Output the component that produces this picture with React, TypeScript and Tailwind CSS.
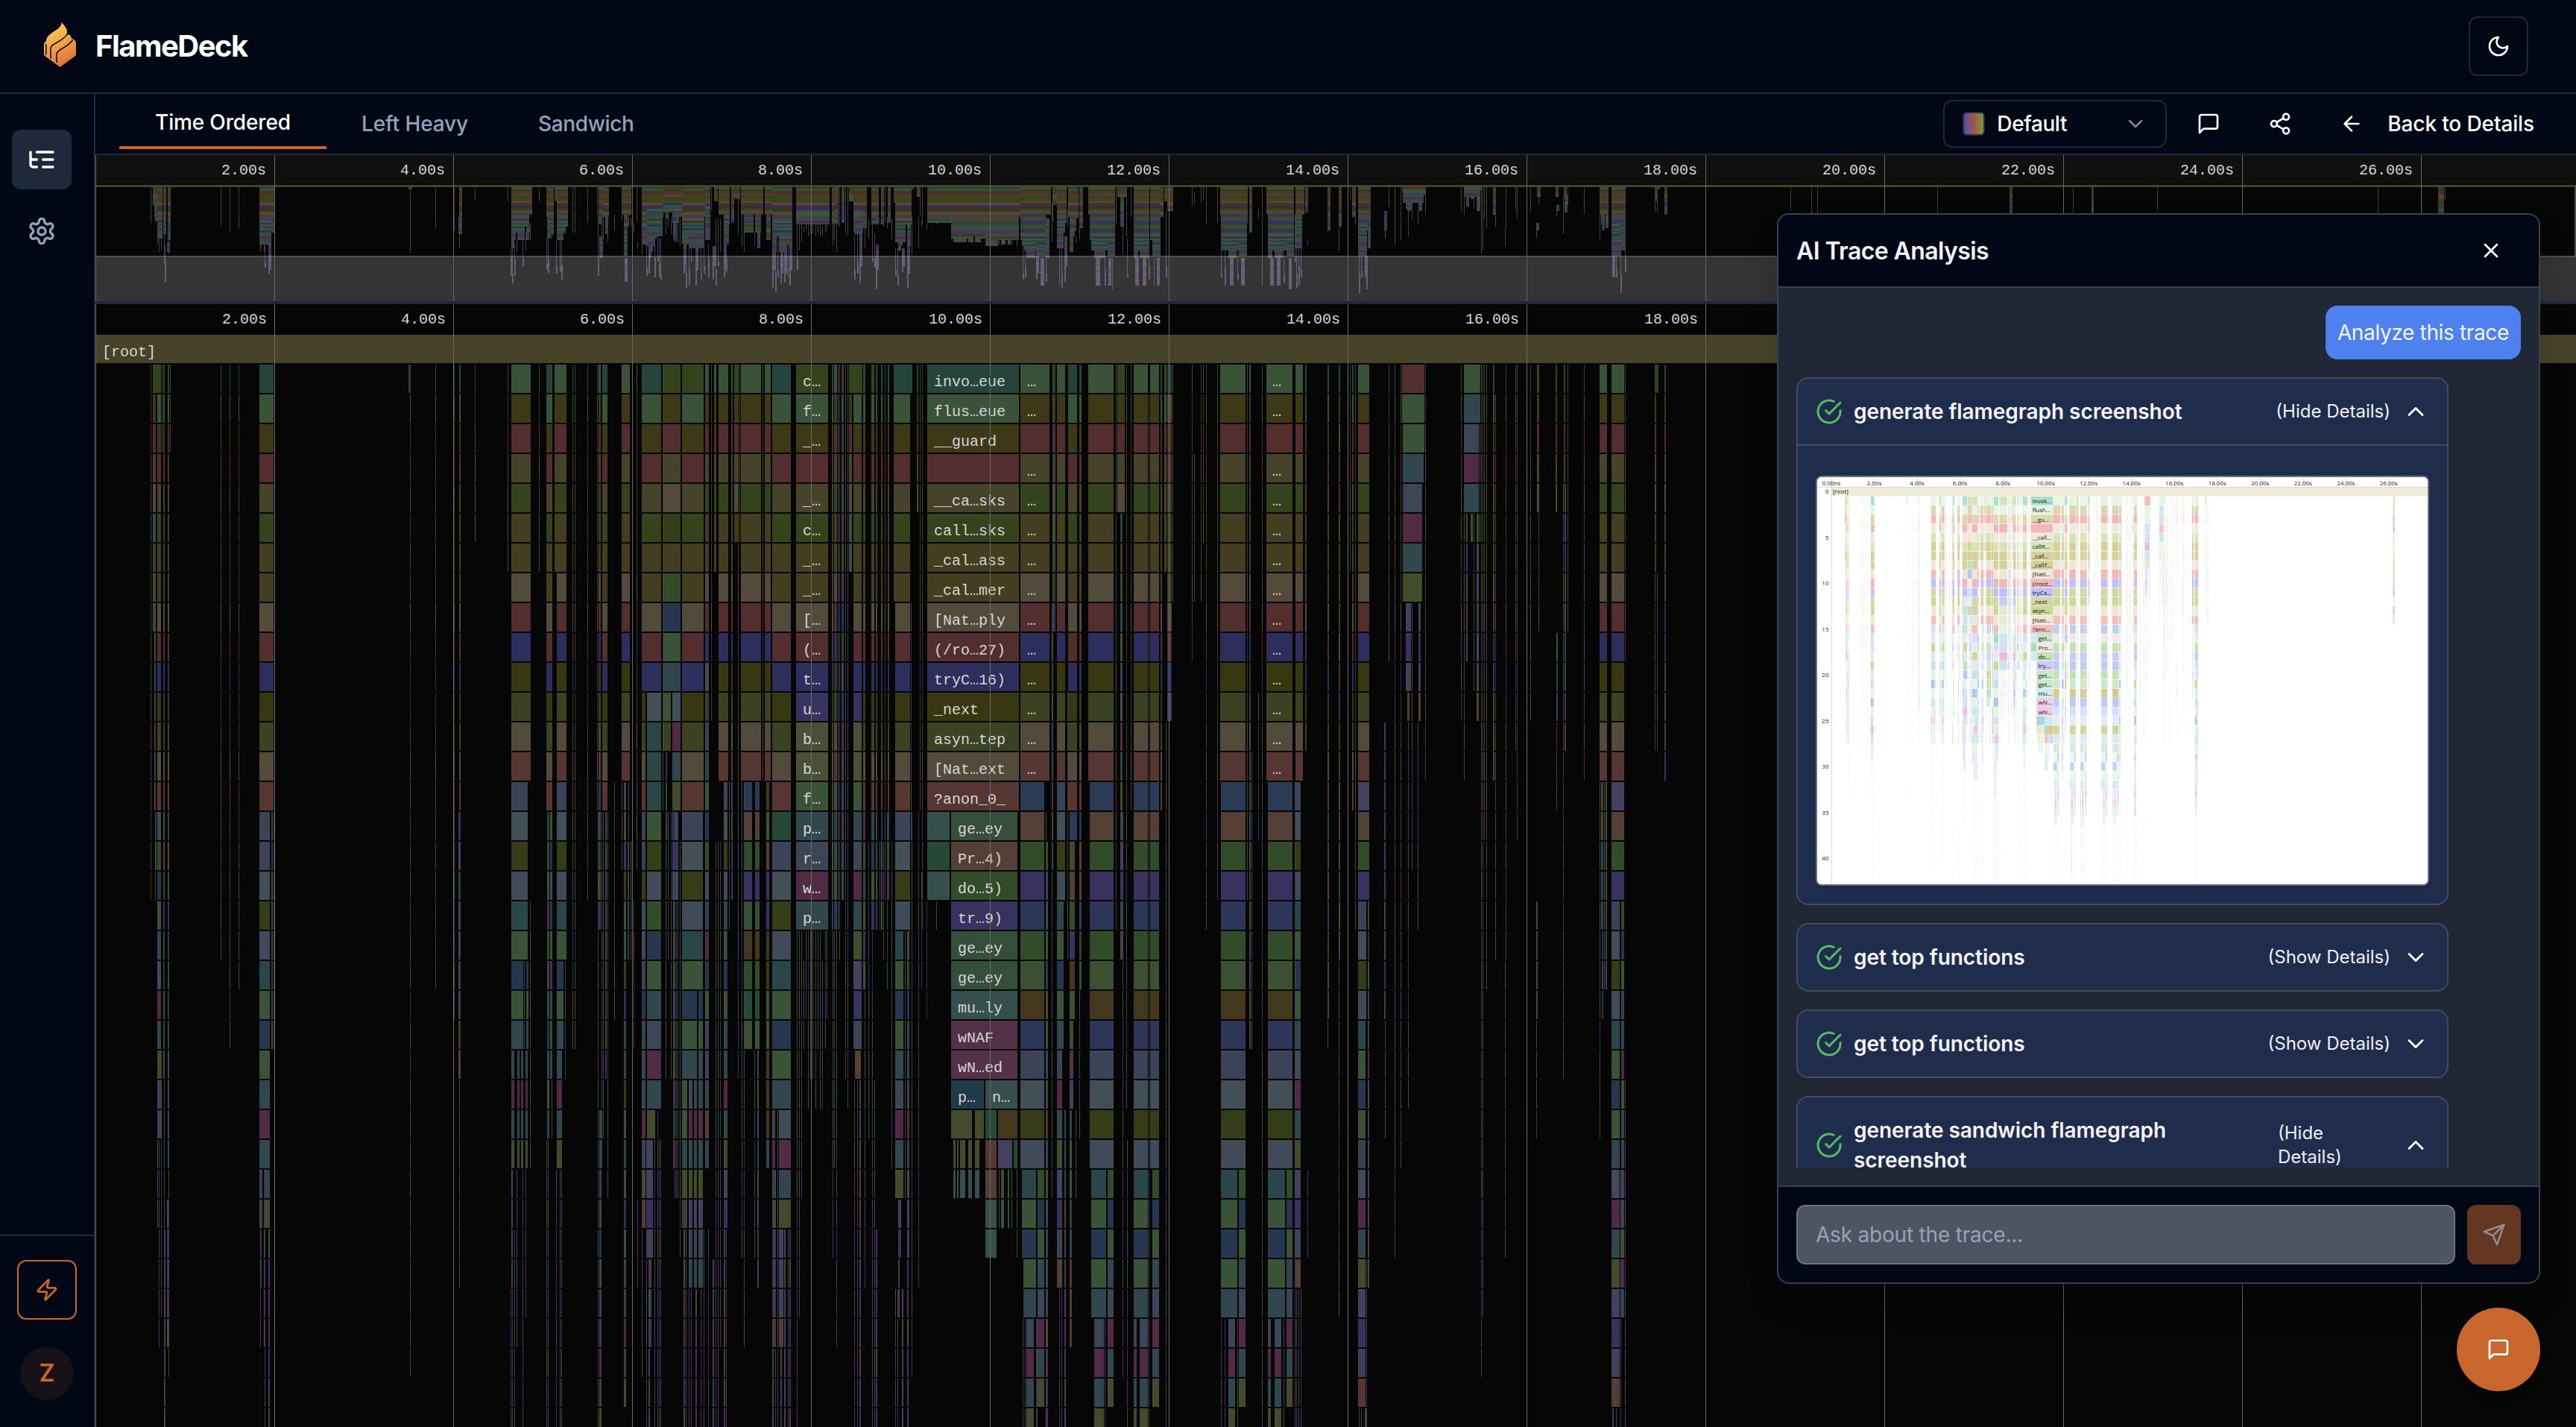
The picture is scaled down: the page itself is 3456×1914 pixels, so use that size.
import React from "react";

type Column = [x: number, w: number, row: number, colors: string];
type Sliver = [x: number, from: number, to: number, w?: number];
type Label = [x: number, row: number, text: string];

const DARK: Record<string, string> = {
  T: "#26453a", g: "#3a5238", o: "#3d3815", r: "#532e2e", k: "#47432a", l: "#34431c", y: "#423e1f",
  s: "#524a3a", b: "#2e2e5c", n: "#373811", m: "#3a4221", R: "#553633", B: "#2c3b55", W: "#533f35",
  F: "#324c29", I: "#37335e", D: "#3d4357", S: "#434f56", O: "#343d17", C: "#404a58", E: "#2a4648",
  P: "#512a44", H: "#27364f", J: "#3b4f31", L: "#43381e", N: "#2d3558", X: "#31464d", A: "#3b4555",
  U: "#444060", V: "#48305a", Y: "#434b2d", w: "#533149", t: "#264836", q: "#364f4c", M: "#344e3b",
  Q: "#213b49", K: "#4a5038",
};

const LIGHT: Record<string, string> = {
  T: "#b0e0cf", g: "#e6f4e6", o: "#ddd8b0", r: "#f1b8b8", k: "#efe9dc", l: "#d6e4b8", y: "#d6d09c",
  s: "#efe6d8", b: "#bfbffa", n: "#d6d6a4", m: "#ccd898", R: "#f2c0bc", B: "#bccff2", W: "#f4e8e4",
  F: "#bfe4b0", I: "#ccc8f8", D: "#d8def6", S: "#e2ecf4", O: "#cdd99a", C: "#e0e8f4", E: "#bfe6e4",
  P: "#eebcdc", H: "#b0c6f2", J: "#cce8c4", L: "#d9c894", N: "#c0c8f6", X: "#cce6ec", A: "#d4e0f0",
  U: "#dcd8f6", V: "#f0dcf4", Y: "#e4ecd0", w: "#f0cce4", t: "#a8dcc0", q: "#d0ecea", M: "#c8e8cc",
  Q: "#a8d4e6", K: "#e4e8d4",
};

const A14 = "gorklyysrbnmsR";
const B15 = "T" + A14;
const DEEP = "BWFINFJLNDSOC";

const COLUMNS: Column[] = [
  [202, 1, 1, "lorksXmmmFgsYUYTFL"], [205, 11, 1, "l"], [205, 4, 2, "orksAmYY"], [207, 2, 10, "gXDPEY"],
  [208, 2, 16, "IC"], [208, 1, 18, "L"], [211, 5, 2, A14 + "qFHgXCPXYUD"], [217, 1, 1, "TXg"],
  [219, 2, 1, "l" + A14 + "qWFIFHgEY"], [225, 2, 1, "l" + A14 + "EWFIBFHEUDDX"], [228, 1, 1, "gor"],
  [296, 1, 1, B15 + "FtFkI"], [308, 1, 1, B15 + "FTFPFXTA"], [320, 1, 1, B15 + "TFYkYY"],
  [348, 19, 1, B15], [348, 14, 16, "DDSOCEgHgXPX"], [364, 2, 16, "FHgXXPEY"], [367, 1, 16, "YXDXgXUX"],
  [348, 4, 28, "XY"], [355, 7, 28, "XY"],
  [548, 3, 1, "T"], [550, 1, 2, A14 + "PRFIYFHgIXDXU"], [584, 1, 1, B15 + "WFRFIX"],
  [609, 1, 1, B15 + "FRgIXYU"], [616, 2, 1, B15], [615, 3, 16, "IUTUDXXLW"],
  [637, 1, 1, "lrksgg"], [681, 1, 1, "lorksgE"],
  [686, 26, 1, A14], [686, 22, 15, "DSOCEg"], [686, 16, 21, "HgX"], [703, 1, 21, "XgE"], [706, 3, 21, "HgX"],
  [686, 4, 24, "XPXY"], [694, 3, 24, "XPXY"], [699, 3, 24, "XPXY"], [705, 3, 24, "XPXY"], [686, 2, 28, "UDXR"],
  [723, 1, 1, "lorkyYY"],
  [733, 8, 1, B15], [734, 3, 16, "TFgPFDXHXgE"], [738, 3, 16, "gHCHgPXgX"],
  [744, 16, 1, "gorklyy"], [747, 13, 8, "srbnmsRDSOCEg"], [747, 9, 21, "HgX"], [747, 7, 24, "XPXY"],
  [768, 1, 1, B15 + "WFWIBHYD"], [771, 1, 1, B15 + "FkUgHFWY"], [788, 1, 1, B15 + "WTX"],
  [801, 1, 1, B15], [803, 3, 1, A14 + "BDTYI"], [808, 7, 1, B15], [804, 3, 26, "XXEgHgXXPXY"],
  [834, 11, 1, A14], [843, 1, 15, "gXgXDH"], [837, 3, 15, "DWILggLbXXOCEgHgXXPXY"],
  [848, 1, 1, A14 + "IgF"], [854, 1, 1, A14 + "DsX"],
  [861, 26, 1, "Tgorklyysrb"], [861, 5, 12, "nmsRDDOCCDHXAAPDYW"], [868, 19, 12, "SEEEgOCFHgXAPX"],
  [868, 11, 26, "Y"], [868, 8, 27, "UUIA"], [871, 3, 31, "WXV"],
  [889, 1, 1, A14 + "X"], [890, 23, 1, "lorksOyFHgX"], [890, 10, 12, "gm"], [902, 11, 12, "SPXY"], [902, 7, 16, "UIC"],
  [893, 2, 14, "IFX"],
  [915, 29, 1, "lgorklyysrbnmsR"], [915, 28, 16, "DSOCEg"], [915, 20, 22, "HgX"], [937, 6, 22, "HgXEPXYUDX"],
  [915, 7, 25, "ggEYF"], [924, 5, 25, "CPXYUDX"], [931, 4, 25, "APXYUDX"],
  [946, 5, 1, "gorklyysrbSmAEgHFCEPHgUDXWX"], [954, 1, 1, "XorklyyIsbnI"], [958, 3, 1, "gorklyy"],
  [964, 13, 1, A14], [971, 5, 15, "DSOCXgHgXXPXYUI"], [981, 2, 1, A14 + "UgII"], [985, 5, 1, "lorkso"],
  [990, 1, 1, A14], [992, 1, 1, "oXrkly"],
  [994, 27, 1, A14], [999, 10, 15, "BWFIMLFtJ"], [1013, 6, 15, "BWFIMLFtg"],
  [1023, 1, 1, A14], [1026, 8, 1, A14], [1028, 4, 15, "LgWIIOOggLLLX"],
  [1036, 25, 1, B15 + "tDSOCEgHgX"], [1036, 4, 26, "DPXYUDXR"], [1045, 16, 26, "CPXY"], [1045, 6, 30, "UDAW"],
  [1068, 43, 1, "lgorklyysrbIKKgXAPX"],
  [1116, 2, 1, B15 + "XgYI"], [1119, 3, 1, A14 + "gTXgH"], [1129, 2, 1, "rgorkLyPbrgIPVVVDX"],
  [1139, 18, 1, "l"], [1139, 4, 2, "orksgY"], [1145, 11, 2, "gorklyysrbIKKgXAPXYUID"], [1147, 8, 24, "W"],
  [1158, 3, 1, B15 + "PFXgIg"], [1169, 4, 1, "l" + A14 + "XHgI"], [1175, 2, 1, B15 + "DXgI"], [1182, 2, 1, B15 + "HDIg"],
  [1187, 1, 1, B15 + "XFP"], [1191, 2, 1, B15 + "XFP"],
  [1199, 25, 1, "T"], [1199, 22, 2, "gorklyy"], [1201, 20, 9, "srbnmsRDSOC"], [1201, 11, 20, "EgHgXAPXY"],
  [1214, 1, 20, "XgHgXAPXY"], [1217, 3, 20, "gFHXXDPXYUD"], [1205, 4, 29, "UI"], [1205, 2, 31, "DW"],
  [1230, 2, 1, "lorks"], [1237, 1, 1, B15 + "IYXP"], [1234, 1, 1, B15],
  [1244, 123, 1, "TgorklyysrbnmsR"], [1244, 30, 16, "qtq"], [1276, 89, 16, "MWFIMMqww"],
  [1276, 44, 25, "Q"], [1322, 43, 25, "q"], [1276, 28, 26, "Y"], [1308, 12, 26, "Y"], [1322, 15, 26, "tRWqq"],
  [1339, 26, 26, "L"], [1339, 19, 27, "U"], [1360, 5, 27, "t"],
  [1279, 3, 27, "Yq"], [1284, 2, 27, "Yq"], [1288, 7, 27, "Yq"], [1299, 5, 27, "Yq"], [1308, 6, 27, "Yq"],
  [1340, 1, 28, "YY"], [1343, 4, 28, "Yq"], [1352, 2, 28, "gq"], [1357, 1, 28, "YY"], [1364, 1, 28, "YYY"],
  [1369, 39, 1, A14], [1369, 32, 15, DEEP], [1371, 19, 28, "EgH"], [1373, 17, 31, "gX"], [1377, 10, 33, "APXY"],
  [1392, 9, 28, "FHgXAPXY"], [1404, 2, 17, "YUggHYgDYPXYUADXsVVV"],
  [1413, 3, 1, "lorksgyoI"], [1418, 11, 1, A14 + "DSOC"], [1418, 9, 19, "EgHgX"], [1418, 7, 24, "APXYUIDW"],
  [1433, 2, 1, B15], [1435, 10, 1, B15 + "B"], [1435, 7, 17, "YWFILg"], [1435, 5, 23, "YwU"], [1435, 3, 26, "EggTXRWR"],
  [1448, 3, 1, B15 + "HWWILg"],
  [1460, 34, 1, A14], [1462, 32, 15, DEEP], [1464, 20, 28, "EgHgX"], [1468, 13, 33, "APXY"], [1486, 8, 28, "FHgXAPXY"],
  [1499, 10, 1, "lorks"], [1503, 3, 6, "TyFXgXSPEYDUIDW"], [1511, 1, 1, B15 + "UWIgXDXPYU"], [1517, 1, 1, B15],
  [1521, 19, 1, A14 + DEEP + "EgHgX"], [1521, 4, 33, "APXY"], [1529, 11, 33, "APXY"],
  [1543, 12, 1, A14 + DEEP], [1546, 9, 28, "FHgXAPXY"],
  [1557, 2, 1, B15], [1562, 3, 1, "lgrkkyy"], [1566, 6, 1, "TsorklyysrbU"],
  [1573, 1, 1, "gorklyyX"], [1599, 1, 1, "gorklyysrb"], [1611, 1, 1, "Torklyyg"], [1614, 1, 1, "gorkls"],
  [1618, 1, 1, B15 + "IFDY"], [1633, 1, 1, B15 + "IWI"],
  [1637, 34, 1, A14], [1638, 33, 15, DEEP], [1638, 22, 28, "EgHgX"], [1662, 9, 28, "FHgXAPXY"], [1648, 9, 33, "APXY"],
  [1676, 2, 1, A14 + "XDgPYXAgX"], [1673, 1, 1, A14 + "gFWX"], [1693, 1, 1, B15],
  [1699, 35, 1, A14], [1701, 33, 15, DEEP], [1701, 23, 28, "EgHgX"], [1726, 8, 28, "FHgXAPXY"],
  [1701, 4, 33, "APXY"], [1710, 9, 33, "APXY"],
  [1738, 10, 1, A14], [1738, 7, 15, "DSOCEgHgXCPXYUIDW"], [1751, 2, 1, "TXorklyysrbnm"],
  [1781, 2, 1, B15 + "TFWILYk"], [1796, 2, 1, "logorklyysrbnmsRXEgX"], [1811, 1, 1, "lTorklT"], [1814, 2, 1, B15],
  [1818, 1, 1, B15 + "FWLY"], [1822, 15, 1, A14 + "UWFI"], [1822, 11, 19, "DSOC"], [1822, 10, 23, "EgHgXCPXYUIDR"],
  [1835, 2, 19, "FHgXXPgXDUDWY"],
  [1857, 2, 13, "VVVVVVAWHF"], [1863, 1, 1, "lorksgykFs"], [1871, 1, 1, "lgokrgyysrbIYkgEXPXYYU"],
  [1879, 1, 1, B15 + "XXPXYYU"], [1881, 30, 1, "rg"], [1882, 29, 3, "g"], [1882, 28, 4, "X"], [1882, 26, 5, "APXY"],
  [1886, 7, 9, "UIA"], [1888, 3, 12, "W"], [1903, 3, 9, "UIAW"], [1912, 1, 1, "loWUtgLITWXYLL"], [1894, 1, 9, "UUWYWVVVY"],
  [1889, 1, 13, "UVUVUTFF"], [1902, 1, 13, "UVVVUUY"], [1960, 1, 1, "lgrkskyIgXgL"],
  [1964, 21, 1, "gX"], [1964, 20, 3, "APX"], [1964, 1, 6, "YIXgXVRUF"], [1967, 2, 6, "YIgRA"], [1973, 3, 6, "Y"],
  [1977, 1, 6, "gIgXYX"], [1981, 3, 6, "YUUXCWW"], [1987, 1, 1, A14 + "YIFYWTY"], [1989, 1, 1, B15 + "FRPIFgX"],
  [1985, 1, 1, "HXgXHg"], [1991, 1, 1, B15 + "L"], [1994, 1, 1, "lgokslkXDYkgIYUPXFYYg"],
  [2003, 2, 1, "lgorklysrbIYYg"], [2006, 1, 2, A14 + "RXYDY"], [2020, 1, 1, "lgorklyysrbIYYgXXPXY"],
  [2033, 1, 1, "Tgorklyysrbnm"], [2035, 1, 1, "XXXPXgUDXRVVVITt"], [2053, 1, 1, "lorksXysgsXg"],
  [2062, 3, 1, "lorks"], [2064, 1, 6, "Xyms"], [2061, 2, 19, "YDAA"], [2087, 2, 1, "lorks"], [2088, 2, 10, "gED"],
  [2088, 1, 13, "PXY"], [2097, 1, 5, "sXygkkYLTTTTFFHgW"], [2098, 2, 1, "lork"], [2099, 2, 5, "gUIgsEqVW"],
  [2103, 1, 1, "lorkXDXgX"], [2125, 1, 1, "TkrksrAXTqALkL"], [2146, 10, 1, A14], [2148, 3, 15, "WYEEE"],
  [2152, 1, 15, "XWgUWFD"], [2154, 2, 15, "YgggWFX"], [2146, 1, 15, "gWgIgDRg"], [2149, 2, 20, "HUH"],
  [2162, 17, 1, A14 + "UWFI"], [2162, 11, 19, "DSOC"], [2162, 11, 23, "EgHgXCPXYUIDW"], [2175, 4, 19, "FHgXXPgXDUDgPX"],
  [2180, 1, 1, "lorkslyysr"], [2220, 5, 1, "l"], [2220, 2, 2, "orksly"], [2220, 1, 8, "XLXkXL"], [2223, 1, 8, "AXLFYL"],
  [2233, 2, 1, "lorkslyXHHXWFI"],
];

const SLIVERS: Sliver[] = [
  [211, 25, 29], [213, 25, 33], [216, 24, 32], [220, 24, 36], [221, 30, 38], [224, 29, 33, 2], [226, 24, 34],
  [349, 30, 33], [350, 29, 31], [354, 28, 33], [355, 28, 38], [360, 30, 42, 2],
  [550, 29, 34], [616, 25, 31], [685, 32, 36], [687, 32, 44], [690, 30, 37], [693, 28, 33], [701, 28, 36], [705, 28, 32], [711, 19, 27],
  [733, 27, 39], [735, 27, 36], [740, 18, 26], [746, 28, 40], [751, 28, 40], [753, 28, 39], [758, 20, 24],
  [802, 16, 36], [807, 16, 27], [809, 16, 26], [812, 16, 24, 2], [815, 16, 28], [824, 15, 22], [834, 15, 17],
  [838, 37, 48, 2], [842, 17, 20], [846, 17, 20], [850, 19, 23], [855, 29, 31], [861, 29, 34], [867, 27, 40], [870, 31, 36, 2], [878, 26, 36],
  [882, 26, 36], [884, 27, 39], [886, 27, 44], [893, 16, 24], [896, 16, 20], [900, 16, 24], [903, 16, 27, 2], [905, 18, 28],
  [907, 18, 28], [909, 16, 28], [912, 17, 30], [917, 29, 40, 2], [920, 28, 44], [924, 32, 42], [927, 29, 36], [933, 32, 42, 2], [940, 32, 44],
  [944, 30, 40], [950, 30, 36], [956, 31, 40, 2], [960, 17, 42], [963, 17, 38], [966, 17, 33], [971, 30, 42, 2], [974, 30, 36],
  [975, 15, 22], [978, 15, 19], [990, 15, 24], [995, 15, 30], [998, 15, 33], [1012, 24, 30], [1016, 24, 31, 2],
  [1036, 30, 42, 2], [1040, 28, 43], [1043, 26, 42], [1052, 30, 44, 2], [1057, 30, 46], [1059, 30, 42, 2], [1047, 34, 44, 2],
  [1069, 20, 36], [1072, 20, 32], [1075, 20, 28], [1078, 21, 23], [1081, 20, 22], [1084, 20, 25], [1087, 20, 24], [1090, 20, 24],
  [1094, 20, 25], [1097, 20, 23], [1100, 20, 25], [1103, 21, 25], [1107, 20, 23], [1109, 20, 22],
  [1117, 18, 30], [1119, 20, 27], [1122, 1, 33], [1124, 1, 19], [1126, 1, 20], [1131, 1, 18], [1134, 1, 24], [1137, 1, 25],
  [1146, 25, 42], [1150, 25, 38], [1153, 25, 40, 2], [1160, 22, 31], [1165, 17, 26], [1170, 20, 36], [1173, 25, 36], [1175, 30, 42, 2],
  [1180, 17, 19], [1185, 17, 20], [1190, 16, 21], [1196, 17, 27], [1201, 32, 42], [1204, 32, 44], [1210, 32, 40, 2], [1217, 31, 44, 2],
  [1223, 16, 34], [1222, 9, 16], [1232, 16, 31], [1236, 18, 21], [1243, 19, 22], [1256, 19, 19],
  [1372, 33, 44], [1375, 33, 40], [1390, 33, 44, 2], [1396, 37, 50, 3], [1403, 16, 44], [1411, 9, 28], [1412, 1, 17],
  [1421, 32, 50], [1424, 32, 44], [1428, 26, 40, 2], [1432, 12, 20], [1443, 26, 28], [1448, 22, 26],
  [1470, 37, 50, 4], [1482, 33, 42], [1487, 37, 50, 2], [1492, 37, 52], [1497, 1, 19], [1506, 16, 34], [1512, 27, 44], [1523, 37, 50, 3], [1533, 37, 50, 3],
  [1541, 2, 40], [1548, 37, 50], [1552, 37, 50, 2], [1564, 13, 40], [1568, 13, 34], [1602, 4, 8],
  [1638, 33, 44], [1643, 33, 40], [1650, 37, 50, 3], [1660, 33, 44], [1665, 37, 50, 3], [1679, 14, 23], [1693, 16, 50], [1688, 12, 16],
  [1704, 37, 50, 3], [1713, 37, 50, 3], [1722, 33, 44], [1729, 37, 52, 2], [1737, 15, 36], [1739, 32, 44], [1742, 32, 40], [1745, 32, 42],
  [1754, 28, 30], [1781, 21, 23], [1796, 21, 32], [1823, 36, 44], [1826, 36, 42], [1831, 36, 46, 2], [1833, 31, 44],
  [1858, 22, 26], [1871, 23, 30], [1879, 23, 27], [1889, 20, 25], [1987, 22, 34], [1989, 23, 32], [2019, 21, 30], [2061, 22, 26],
  [2097, 22, 24], [2146, 22, 26], [2163, 36, 46, 2], [2168, 36, 42], [2174, 28, 44], [2180, 25, 36],
];

const LATE_COLUMNS: Column[] = [
  [2402, 1, 1, "lorkslyysrbI"], [2430, 1, 1, "lorkslyysrbIYY"], [2438, 1, 1, "lorkslyysrbIYY"], [2599, 1, 1, "lorkslyysrbIYL"],
  [2696, 4, 1, "lorksPyXHIYHUL"], [2781, 1, 1, "lgorklyysrbnmD"], [2806, 3, 1, "lorrsbmyYXUXXE"], [2894, 1, 1, "lorWklyWDXRI"],
  [3190, 1, 1, "lgXorklyyWIDUY"], [3271, 8, 1, "lorrskloOFHgHX"], [3280, 1, 1, "Tgorks"],
];

const MAIN_LABELS: Label[] = [
  ...["invo…eue", "flus…eue", "__guard", "", "__ca…sks", "call…sks", "_cal…ass", "_cal…mer", "[Nat…ply", "(/ro…27)", "tryC…16)", "_next", "asyn…tep", "[Nat…ext", "?anon_0_"].map((t, i): Label => [1253, i + 1, t]),
  ...["ge…ey", "Pr…4)", "do…5)", "tr…9)", "ge…ey", "ge…ey", "mu…ly", "wNAF", "wN…ed", "p…"].map((t, i): Label => [1285, i + 16, t]),
  [1331, 25, "n…"],
  ...["c…", "f…", "_…", "", "_…", "c…", "_…", "_…", "[…", "(…", "t…", "u…", "b…", "b…", "f…", "p…", "r…", "w…", "p…"].map((t, i): Label => [1077, i + 1, t]),
  ...[1378, 1707].flatMap((x) => [1, 2, 4, 5, 6, 7, 8, 9, 10, 11, 12, 13, 14].map((r): Label => [x, r, "…"])),
];

const UPPER_TONES = "gXIYkADsEHFPUWTY";
const LOWER_TONES = "VUVIXVgWUV";

function sliverColors([x, from, to]: Sliver): string {
  let out = "";
  for (let r = from; r <= to; r++) {
    const h = Math.abs(Math.imul(x * 31 + r * 17, 2654435761) >> 8);
    out += r > 27 ? LOWER_TONES[h % LOWER_TONES.length] : UPPER_TONES[h % UPPER_TONES.length];
  }
  return out;
}

const sliverColumn = (s: Sliver): Column => [s[0], s[3] ?? 1, s[1], sliverColors(s)];
const ALL: Column[] = [...COLUMNS, ...SLIVERS.map(sliverColumn)];

const DEEP_TAILS: Column[] = SLIVERS.filter((s) => s[2] >= 36 && s[2] < 46).map((s) =>
  sliverColumn([s[0], s[2] + 1, s[2] + 2 + ((s[0] * 7) % 9), 2]),
);
const OVERVIEW_COLUMNS: Column[] = [
  ...ALL.map(([x, w, row, colors]): Column => [x, w > 1 ? w + 2 : 1, row, colors]),
  ...DEEP_TAILS,
  ...LATE_COLUMNS,
];

const TICKS = Array.from({ length: 14 }, (_, i) => i);
const tickX = (i: number) => Math.floor(128 + 240.03 * i);

function Frames({ columns, top, pitch, height, palette, maxRow = 60, left = 0, scale = 1 }: {
  columns: Column[]; top: number; pitch: number; height: number; palette: Record<string, string>; maxRow?: number; left?: number; scale?: number;
}) {
  const paths: Record<string, string> = {};
  for (const [x, w, row, colors] of columns) {
    for (let i = 0; i < colors.length; i++) {
      const r = row + i;
      if (r > maxRow) break;
      const c = colors[i];
      const px = +(left + x * scale).toFixed(2);
      const py = +(top + r * pitch).toFixed(2);
      const pw = +(w * scale).toFixed(2);
      paths[c] = (paths[c] ?? "") + `M${px} ${py}h${pw}v${height}h${-pw}z`;
    }
  }
  return <>{Object.entries(paths).map(([c, d]) => <path key={c} d={d} fill={palette[c]} />)}</>;
}

function AxisLabels({ y, dx, count }: { y: number; dx: number; count: number }) {
  return <>{TICKS.slice(1, count + 1).map((i) => (
    <text key={i} x={tickX(i) + dx} y={y} textAnchor="end" fill="#d6d6d6">{`${i * 2}.00s`}</text>
  ))}</>;
}

function Overview() {
  return (
    <svg viewBox="128 208 3328 196" className="block h-[196px] w-full font-['Liberation_Mono',monospace] text-[20px]">
      <rect x="128" y="208" width="3328" height="196" fill="#060606" />
      <rect x="128" y="248" width="3328" height="3" fill="#47432a" />
      <g shapeRendering="crispEdges"><Frames columns={OVERVIEW_COLUMNS} top={248.4} pitch={2.64} height={2.64} palette={DARK} /></g>
      <rect x="128" y="343" width="3328" height="61" fill="#fff" fillOpacity="0.19" />
      <rect x="128" y="343" width="3328" height="2" fill="#fff" fillOpacity="0.12" />
      <rect x="128" y="208" width="3328" height="38" fill="#101010" />
      {TICKS.map((i) => <rect key={i} x={tickX(i)} y="208" width="1" height="196" fill="#666" />)}
      <rect x="3454" y="248" width="2" height="96" fill="#4c4c4c" />
      <AxisLabels y={234} dx={-11} count={13} />
    </svg>
  );
}

function FlameChart() {
  return (
    <svg viewBox="128 408 3328 1506" className="block h-[1506px] w-full font-['Liberation_Mono',monospace] text-[20px]">
      <rect x="128" y="408" width="3328" height="1506" fill="#060606" />
      <rect x="128" y="449" width="3328" height="38" fill="#47432a" />
      <g shapeRendering="crispEdges"><Frames columns={ALL} top={449} pitch={40} height={38} palette={DARK} maxRow={36} /></g>
      <g fill="#d6d6d4">
        <text x="137" y="478">[root]</text>
        {MAIN_LABELS.map(([x, r, t]) => t && <text key={`${x}-${r}`} x={x} y={478 + r * 40}>{t}</text>)}
      </g>
      {TICKS.map((i) => <rect key={i} x={tickX(i)} y="408" width="1" height="1506" fill="#686868" />)}
      <AxisLabels y={434} dx={-10} count={9} />
    </svg>
  );
}

const THUMB_LABELS = ["invok…", "flush…", "__gu…", "", "__call…", "callR…", "_call…", "_callT…", "[Nati…", "(/root…", "tryCa…", "_next", "asyn…", "[Nati…", "?ano…"];
const THUMB_LABELS_2 = ["get…", "Pro…", "do…", "try…", "get…", "get…", "mu…", "wN…", "wN…"];

function Thumbnail() {
  return (
    <div className="h-[550px] w-full overflow-hidden rounded-lg border-2 border-[#6b7280] bg-white shadow-md">
      <svg viewBox="2439 640 820 546" preserveAspectRatio="none" className="block size-full font-['Open_Sans',sans-serif] text-[8px] font-medium">
        <rect x="2439" y="640" width="820" height="546" fill="#fff" />
        <rect x="2458" y="653.5" width="801" height="12" fill="#efebd9" />
        <Frames columns={[...ALL, ...LATE_COLUMNS.slice(-2)]} left={2458.2 - 128 * 0.24} scale={0.24} top={653.6} pitch={12.29} height={11.5} palette={LIGHT} maxRow={27} />
        <g opacity="0.8">
          <Frames columns={ALL.filter((c) => c[1] > 3)} left={2458.2 - 128 * 0.24} scale={0.24} top={653.6 + 0} pitch={12.29} height={11.5} palette={LIGHT} maxRow={42} />
        </g>
        <g opacity="0.4">
          <Frames columns={ALL.filter((c) => c[1] <= 3 && c[2] > 27)} left={2458.2 - 128 * 0.24} scale={0.24} top={653.6} pitch={12.29} height={12.29} palette={LIGHT} maxRow={42} />
        </g>
        <rect x="2439" y="653" width="820" height="0.7" fill="#ccc" />
        <rect x="2458" y="640" width="0.7" height="546" fill="#ccc" />
        {TICKS.map((i) => (
          <g key={i}>
            <rect x={2458 + i * 57.6} y="640" width="0.7" height="13" fill="#ccc" />
            <text x={2458 + i * 57.6} y="651" textAnchor="middle" fill="#222">{i ? `${i * 2}.00s` : "0.00ns"}</text>
          </g>
        ))}
        {[0, 5, 10, 15, 20, 25, 30, 35, 40].map((n) => (
          <text key={n} x="2454.5" y={662.5 + n * 12.29} textAnchor="end" fill="#222">{n}</text>
        ))}
        <g fill="#111">
          <text x="2460" y="662.5">[root]</text>
          {THUMB_LABELS.map((t, i) => <text key={i} x="2728" y={675 + i * 12.29}>{t}</text>)}
          {THUMB_LABELS_2.map((t, i) => <text key={i} x="2736" y={675 + (i + 15) * 12.29}>{t}</text>)}
        </g>
      </svg>
    </div>
  );
}

function Icon({ size = 32, className = "", children }: { size?: number; className?: string; children: React.ReactNode }) {
  return (
    <svg width={size} height={size} viewBox="0 0 24 24" fill="none" stroke="currentColor" strokeWidth="2" strokeLinecap="round" strokeLinejoin="round" className={"shrink-0 " + className}>
      {children}
    </svg>
  );
}

const MessageIcon = () => <Icon><path d="M21 15a2 2 0 0 1-2 2H7l-4 4V5a2 2 0 0 1 2-2h14a2 2 0 0 1 2 2z" /></Icon>;

function Logo() {
  return (
    <svg width="43" height="60" viewBox="0 0 43 60" className="-mt-1 shrink-0">
      <defs>
        <linearGradient id="flame" x1="0.3" y1="0" x2="0.7" y2="1">
          <stop offset="0" stopColor="#f8cf55" />
          <stop offset="0.45" stopColor="#f2a548" />
          <stop offset="1" stopColor="#dc6b35" />
        </linearGradient>
      </defs>
      <path d="M23.500 0C27 3.500 30.500 7.500 31 12c.1 1.500-.2 3-.7 4l4.200.8c1.500 1.200 2.300 3 2.500 5 3 .8 6 3 6 6.200V42c0 1.500-.6 2.400-1.600 3.600L21.500 60 1.800 45.600C.6 44.500 0 43.500 0 42V30c0-1.800.6-3 2.800-4.500.2-4.500 2.200-7 5.700-9.800C13 12 18.500 9.500 21.300 6 22.800 4 23.600 2.200 23.500 0z" fill="url(#flame)" />
      <path d="M31.500 15.500C28 22.500 18 26 11.500 30.500 9.300 32 9 33 9 35v13.500M38.500 23.500C34 31 25 34 19.500 38.500 17.500 40 17 41 17 43v11M2.800 29v14.500" fill="none" stroke="#150f1c" strokeWidth="1.6" />
    </svg>
  );
}

function ToolCard({ title, details, open, children }: { title: React.ReactNode; details: React.ReactNode; open?: boolean; children?: React.ReactNode }) {
  return (
    <div className="w-[875px] shrink-0 overflow-hidden rounded-2xl border-2 border-[#454c59] bg-[#202c4c]">
      <div className="flex items-center px-6 py-6">
        <Icon size={36} className="text-[#51bf61]">
          <path d="M22 11.08V12a10 10 0 1 1-5.93-9.14" />
          <path d="m9 11 3 3L22 4" />
        </Icon>
        <span className="ml-[15px] flex-1 text-[28px] leading-10 font-semibold tracking-[-0.05px] text-[#f4f5f8]">{title}</span>
        <span className="text-2xl leading-8 text-[#eef0f4]">{details}</span>
        <Icon size={36} className="ml-4 text-[#f4f5f8]">{open ? <path d="m18 15-6-6-6 6" /> : <path d="m6 9 6 6 6-6" />}</Icon>
      </div>
      {children}
    </div>
  );
}

function ChatPanel() {
  return (
    <section className="absolute top-[286px] left-[2384px] flex h-[1436px] w-[1024px] flex-col overflow-hidden rounded-2xl border-2 border-[#374151] bg-[#212835] shadow-2xl">
      <header className="flex h-[98px] shrink-0 items-center justify-between border-b-2 border-[#374151] bg-[#020715] pr-[48px] pl-6">
        <h2 className="pt-0.5 text-[32px] font-semibold tracking-[-0.6px] text-[#f4f5f8]">AI Trace Analysis</h2>
        <Icon className="text-white"><path d="M18 6 6 18M6 6l12 12" /></Icon>
      </header>
      <div className="min-h-0 flex-1 px-6 py-6">
        <div className="flex h-full flex-col gap-6 overflow-hidden">
          <div className="shrink-0 self-end rounded-2xl bg-[#4e80ee] px-4 py-4 text-[28px] leading-10 tracking-[-0.35px] whitespace-nowrap text-[#f4f5f8]">Analyze this trace</div>
          <ToolCard title="generate flamegraph screenshot" details="(Hide Details)" open>
            <div className="border-t-2 border-[#454c59] px-6 pt-10 pb-6"><Thumbnail /></div>
          </ToolCard>
          <ToolCard title="get top functions" details="(Show Details)" />
          <ToolCard title="get top functions" details="(Show Details)" />
          <ToolCard title={<>generate sandwich flamegraph<br />screenshot</>} details={<span className="block w-[151px]">(Hide<br />Details)</span>} open />
        </div>
      </div>
      <footer className="flex h-[130px] shrink-0 gap-4 border-t-2 border-[#374151] bg-[#020715] px-6 pt-6">
        <div className="flex h-20 flex-1 items-center rounded-xl border-2 border-[#6b7280] bg-[#4e5562] px-6 text-[28px] tracking-[-0.2px] text-[#94a3b8]">Ask about the trace...</div>
        <button className="flex h-20 w-[72px] items-center justify-center rounded-xl bg-[#653621] text-[#8b8b90]">
          <Icon><path d="m22 2-7 20-4-9-9-4Z" /><path d="M22 2 11 13" /></Icon>
        </button>
      </footer>
    </section>
  );
}

function Sidebar() {
  return (
    <aside className="flex w-32 shrink-0 flex-col justify-between border-r-2 border-[#1e293b]">
      <nav className="flex flex-col gap-4 pt-12 pl-4">
        <div className="flex size-20 items-center justify-center rounded-xl bg-[#1e293b] text-white">
          <Icon size={40}><path d="M21 12h-8M21 6H8M21 18h-8M3 6v4c0 1.1.9 2 2 2h3M3 10v6c0 1.1.9 2 2 2h3" /></Icon>
        </div>
        <div className="flex size-20 items-center justify-center text-[#94a3b8]">
          <Icon size={40}>
            <path d="M12.22 2h-.44a2 2 0 0 0-2 2v.18a2 2 0 0 1-1 1.73l-.43.25a2 2 0 0 1-2 0l-.15-.08a2 2 0 0 0-2.73.73l-.22.38a2 2 0 0 0 .73 2.73l.15.1a2 2 0 0 1 1 1.72v.51a2 2 0 0 1-1 1.74l-.15.09a2 2 0 0 0-.73 2.73l.22.38a2 2 0 0 0 2.73.73l.15-.08a2 2 0 0 1 2 0l.43.25a2 2 0 0 1 1 1.73V20a2 2 0 0 0 2 2h.44a2 2 0 0 0 2-2v-.18a2 2 0 0 1 1-1.73l.43-.25a2 2 0 0 1 2 0l.15.08a2 2 0 0 0 2.73-.73l.22-.39a2 2 0 0 0-.73-2.73l-.15-.08a2 2 0 0 1-1-1.74v-.5a2 2 0 0 1 1-1.74l.15-.09a2 2 0 0 0 .73-2.73l-.22-.38a2 2 0 0 0-2.73-.73l-.15.08a2 2 0 0 1-2 0l-.43-.25a2 2 0 0 1-1-1.73V4a2 2 0 0 0-2-2z" />
            <circle cx="12" cy="12" r="3" />
          </Icon>
        </div>
      </nav>
      <div className="flex h-[258px] flex-col items-center gap-9 border-t-2 border-[#1e293b] pt-8">
        <div className="flex size-20 items-center justify-center rounded-xl border-2 border-[#c9662d] text-[#c9662d]">
          <Icon><path d="M4 14a1 1 0 0 1-.78-1.63l9.9-10.2a.5.5 0 0 1 .86.46l-1.92 6.02A1 1 0 0 0 13 10h7a1 1 0 0 1 .78 1.63l-9.9 10.2a.5.5 0 0 1-.86-.46l1.92-6.02A1 1 0 0 0 11 14z" /></Icon>
        </div>
        <div className="flex size-[72px] items-center justify-center rounded-full border-2 border-[#0d1320] bg-[#171118] text-[32px] font-semibold text-[#c9662d]">Z</div>
      </div>
    </aside>
  );
}

function Toolbar() {
  return (
    <div className="flex h-[82px] shrink-0 items-stretch justify-between border-b-2 border-[#1e293b] pr-[56px] pl-8 text-[28px] font-medium">
      <div className="flex h-[74px] items-stretch">
        <div className="w-[278px] border-b-4 border-[#c9662d] pt-[18px] pl-12 leading-10 tracking-[-0.15px] text-white">Time Ordered</div>
        <div className="w-[237px] pt-[20px] pl-[47px] leading-10 tracking-[-0.1px] text-[#94a3b8]">Left Heavy</div>
        <div className="pt-[20px] pl-[47px] leading-10 tracking-[-0.35px] text-[#94a3b8]">Sandwich</div>
      </div>
      <div className="flex items-center text-white">
        <div className="flex h-16 w-[300px] items-center rounded-xl border-2 border-[#1e293b] px-6">
          <span className="h-8 w-[30px] rounded-md border-2 border-[#27303f] bg-linear-to-r from-[#5a48a6] via-[#9e4f4c] to-[#6d9c38]" />
          <span className="ml-4 flex-1 tracking-[-0.4px]">Default</span>
          <Icon className="opacity-50"><path d="m6 9 6 6 6-6" /></Icon>
        </div>
        <div className="ml-10"><MessageIcon /></div>
        <div className="ml-16">
          <Icon><circle cx="18" cy="5" r="3" /><circle cx="6" cy="12" r="3" /><circle cx="18" cy="19" r="3" /><path d="m8.59 13.51 6.83 3.98M15.41 6.51l-6.82 3.98" /></Icon>
        </div>
        <Icon className="ml-16"><path d="m12 19-7-7 7-7M19 12H5" /></Icon>
        <span className="ml-8 tracking-[-0.13px]">Back to Details</span>
      </div>
    </div>
  );
}

export default function App() {
  return (
    <div className="relative flex h-[1914px] w-[3456px] flex-col overflow-hidden bg-[#020715] font-['Inter',sans-serif]">
      <header className="flex h-[126px] shrink-0 items-center justify-between border-b-2 border-[#1e293b] pr-16 pl-[59px]">
        <div className="flex items-center gap-[26px]">
          <Logo />
          <span className="text-[40px] font-bold tracking-[-1.5px] text-white">FlameDeck</span>
        </div>
        <button className="flex size-20 items-center justify-center rounded-xl border-2 border-[#1e293b] text-white">
          <Icon><path d="M12 3a6 6 0 0 0 9 9 9 9 0 1 1-9-9Z" /></Icon>
        </button>
      </header>
      <div className="flex min-h-0 flex-1">
        <Sidebar />
        <main className="flex min-w-0 flex-1 flex-col">
          <Toolbar />
          <Overview />
          <div className="h-1 shrink-0 bg-[#1e293b]" />
          <FlameChart />
        </main>
      </div>
      <ChatPanel />
      <button className="absolute top-[1754px] left-[3296px] flex size-28 items-center justify-center rounded-full bg-[#c9662d] text-white shadow-lg"><MessageIcon /></button>
    </div>
  );
}
